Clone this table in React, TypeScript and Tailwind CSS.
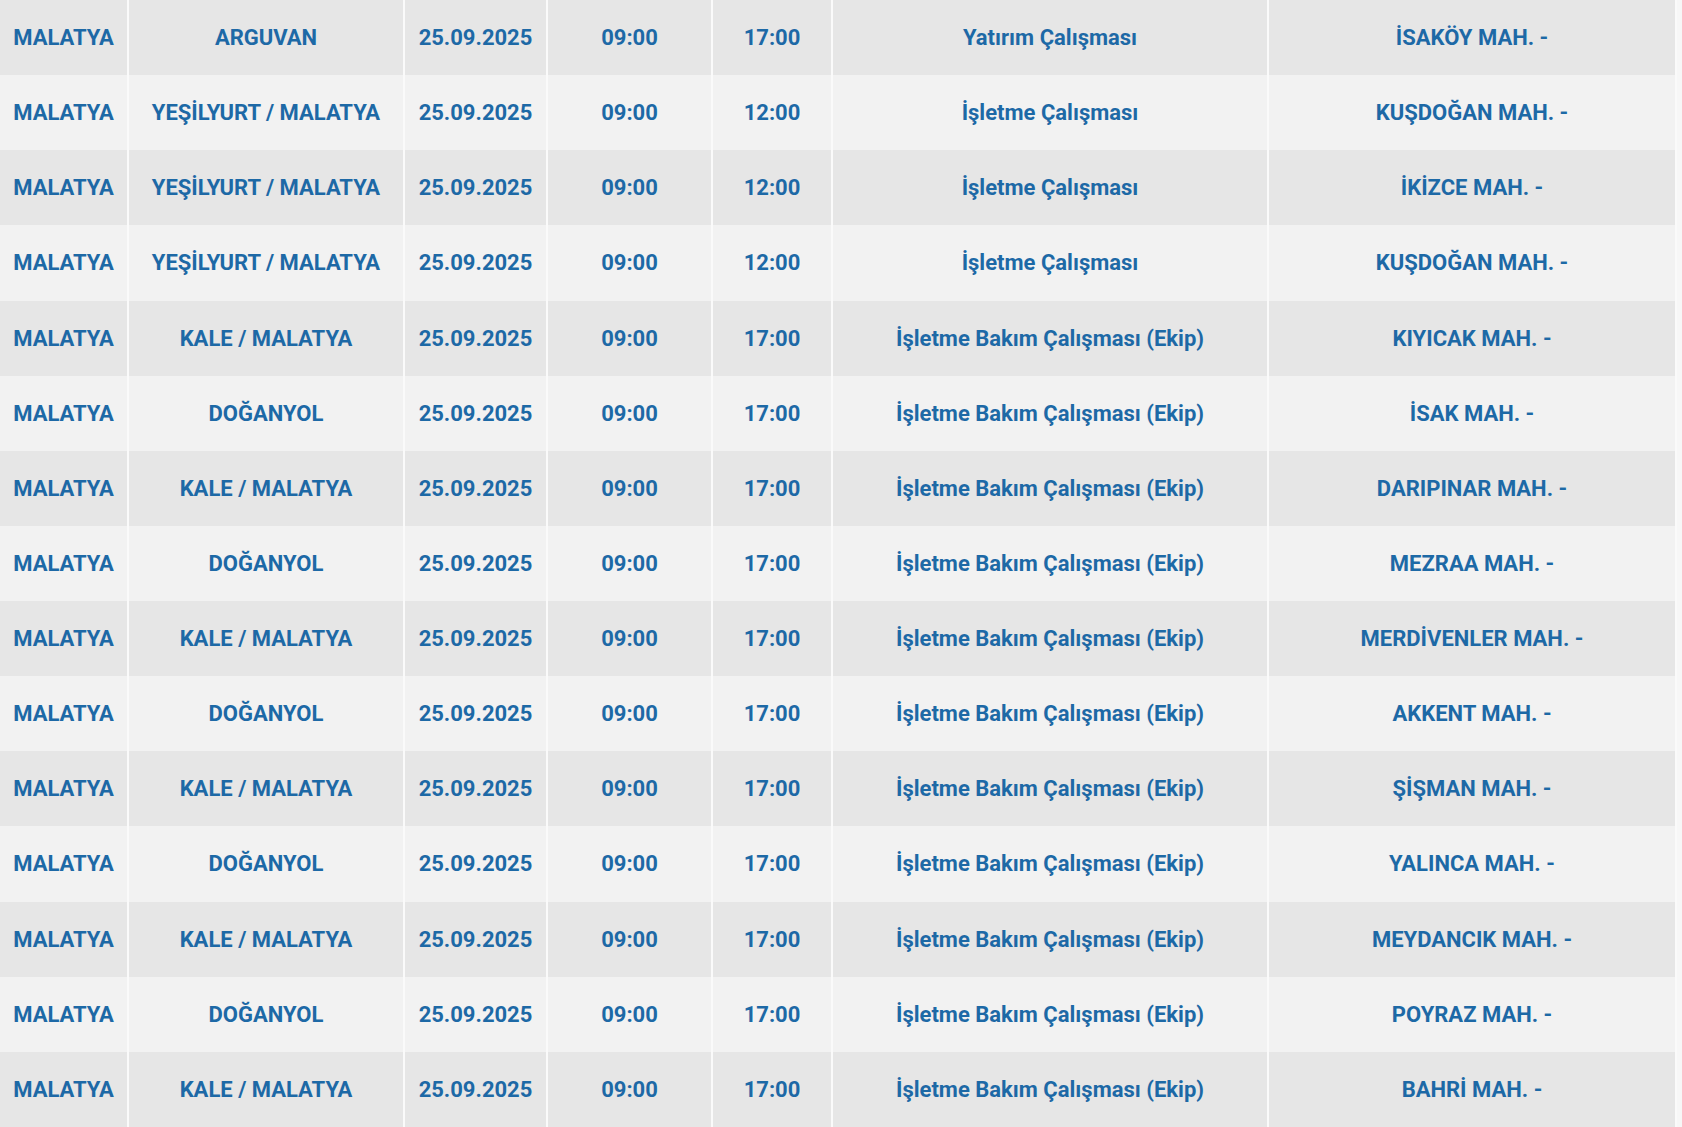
import React from "react";

const ROWS: [string, string, string, string, string][] = [
  ["ARGUVAN", "17:00", "Yatırım Çalışması", "İSAKÖY MAH. -", ""],
  ["YEŞİLYURT / MALATYA", "12:00", "İşletme Çalışması", "KUŞDOĞAN MAH. -", ""],
  ["YEŞİLYURT / MALATYA", "12:00", "İşletme Çalışması", "İKİZCE MAH. -", ""],
  ["YEŞİLYURT / MALATYA", "12:00", "İşletme Çalışması", "KUŞDOĞAN MAH. -", ""],
  ["KALE / MALATYA", "17:00", "İşletme Bakım Çalışması (Ekip)", "KIYICAK MAH. -", ""],
  ["DOĞANYOL", "17:00", "İşletme Bakım Çalışması (Ekip)", "İSAK MAH. -", ""],
  ["KALE / MALATYA", "17:00", "İşletme Bakım Çalışması (Ekip)", "DARIPINAR MAH. -", ""],
  ["DOĞANYOL", "17:00", "İşletme Bakım Çalışması (Ekip)", "MEZRAA MAH. -", ""],
  ["KALE / MALATYA", "17:00", "İşletme Bakım Çalışması (Ekip)", "MERDİVENLER MAH. -", ""],
  ["DOĞANYOL", "17:00", "İşletme Bakım Çalışması (Ekip)", "AKKENT MAH. -", ""],
  ["KALE / MALATYA", "17:00", "İşletme Bakım Çalışması (Ekip)", "ŞİŞMAN MAH. -", ""],
  ["DOĞANYOL", "17:00", "İşletme Bakım Çalışması (Ekip)", "YALINCA MAH. -", ""],
  ["KALE / MALATYA", "17:00", "İşletme Bakım Çalışması (Ekip)", "MEYDANCIK MAH. -", ""],
  ["DOĞANYOL", "17:00", "İşletme Bakım Çalışması (Ekip)", "POYRAZ MAH. -", ""],
  ["KALE / MALATYA", "17:00", "İşletme Bakım Çalışması (Ekip)", "BAHRİ MAH. -", ""],
];

// sütun genişlikleri (px)
const COLS = [128, 276, 143, 165, 120, 436, 408];

export default function App() {
  return (
    <div
      className="flex h-[1127px] w-[1682px] overflow-hidden bg-[#f7f7f7]"
      style={{ fontFamily: "Roboto, 'Liberation Sans', sans-serif" }}
    >
      <table className="w-[1676px] table-fixed border-collapse">
        <colgroup>
          {COLS.map((w, i) => (
            <col key={i} style={{ width: w }} />
          ))}
        </colgroup>
        <tbody>
          {ROWS.map((r, i) => (
            <tr
              key={i}
              className={`h-[75.13px] ${i % 2 === 0 ? "bg-[#e6e6e6]" : "bg-[#f2f2f2]"}`}
            >
              {[
                "MALATYA",
                r[0],
                "25.09.2025",
                "09:00",
                r[1],
                r[2],
                r[3],
              ].map((t, j) => (
                <td
                  key={j}
                  className="whitespace-nowrap border-x-2 border-[#fafafa] p-0 text-center text-[22px] font-bold text-[#1d69a6] first:border-l-0"
                >
                  {t}
                </td>
              ))}
            </tr>
          ))}
        </tbody>
      </table>
    </div>
  );
}
